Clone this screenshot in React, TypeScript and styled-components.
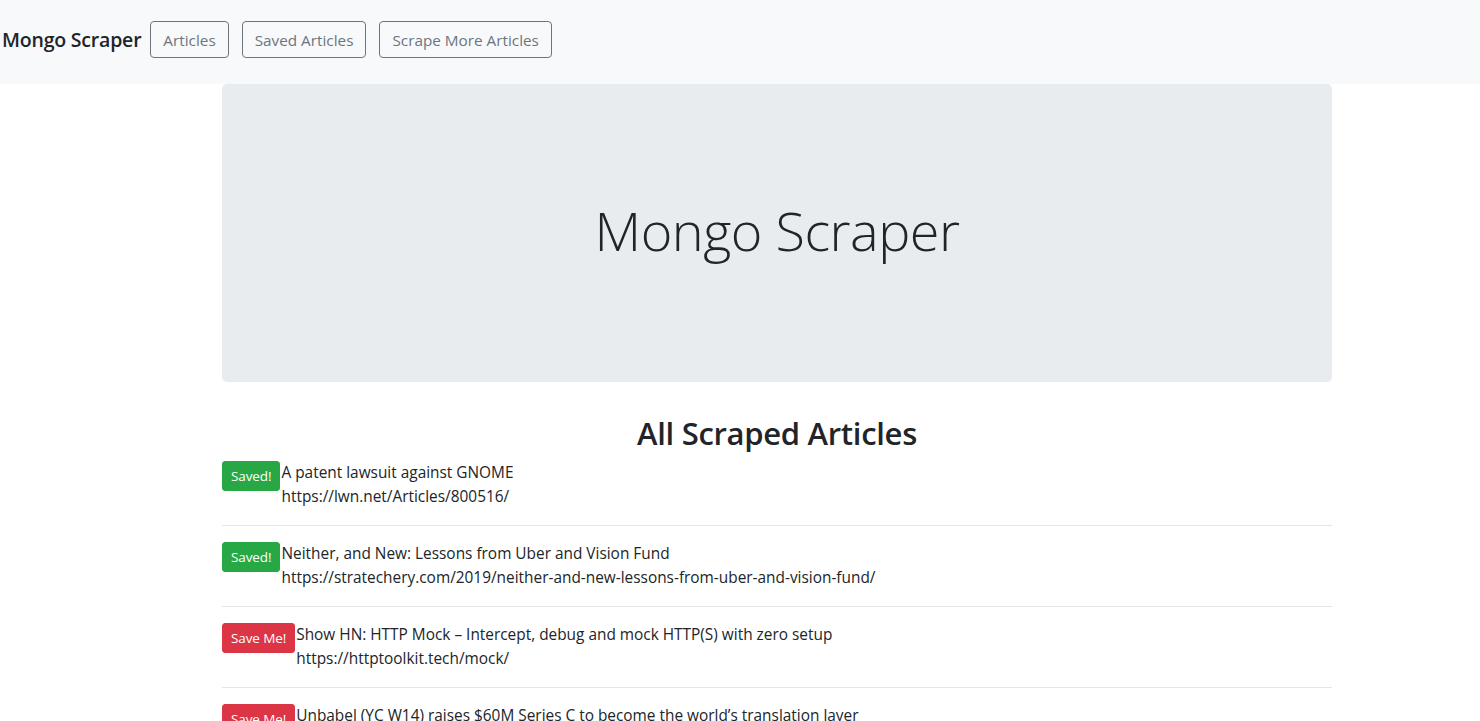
import styled, { createGlobalStyle } from "styled-components";

const GlobalStyle = createGlobalStyle`
  body {
    margin: 0;
    font-family: "Open Sans", "Noto Sans", sans-serif;
    font-size: 16px;
    line-height: 1.5;
    color: #212529;
    background: #fff;
  }
  * {
    box-sizing: border-box;
  }
`;

const Navbar = styled.nav`
  display: flex;
  align-items: center;
  height: 84px;
  padding: 0 2px 5px;
  background: #f8f9fa;
`;

const Brand = styled.a`
  font-size: 19.5px;
  font-weight: 600;
  color: #212529;
  margin-right: 9px;
  text-decoration: none;
  letter-spacing: -0.2px;
`;

const NavButton = styled.button`
  height: 37px;
  padding: 0 12px;
  margin-right: 13px;
  font-family: inherit;
  font-size: 15.3px;
  color: #6c757d;
  background: transparent;
  border: 1px solid #6c757d;
  border-radius: 4px;
`;

const Container = styled.main`
  width: 1110px;
  margin-left: 222px;
`;

const Jumbotron = styled.section`
  display: flex;
  align-items: center;
  justify-content: center;
  height: 298px;
  padding-bottom: 5px;
  margin-bottom: 32px;
  background: #e9ecef;
  border-radius: 5px;
`;

const Display = styled.h1`
  margin: 0;
  font-size: 54px;
  font-weight: 300;
  line-height: 1.2;
  letter-spacing: -0.5px;
`;

const Heading = styled.h2`
  margin: 0 0 8px;
  text-align: center;
  font-size: 31px;
  font-weight: 600;
  line-height: 1.26;
  letter-spacing: -0.3px;
`;

const Row = styled.div`
  display: flex;
  align-items: flex-start;
`;

const SaveButton = styled.button<{ $saved: boolean }>`
  flex: none;
  height: 30px;
  padding: 0 8px;
  font-family: inherit;
  font-size: 13.5px;
  color: #fff;
  background: ${(p) => (p.$saved ? "#28a745" : "#dc3545")};
  border: 1px solid ${(p) => (p.$saved ? "#28a745" : "#dc3545")};
  border-radius: 3px;
  letter-spacing: -0.1px;
`;

const Info = styled.div`
  padding-left: 1px;
  font-size: 15.4px;
  line-height: 24px;
`;

const Divider = styled.hr`
  margin: 16px 0;
  border: 0;
  border-top: 1px solid rgba(0, 0, 0, 0.1);
`;

const articles = [
  {
    saved: true,
    title: "A patent lawsuit against GNOME",
    link: "https://lwn.net/Articles/800516/",
  },
  {
    saved: true,
    title: "Neither, and New: Lessons from Uber and Vision Fund",
    link: "https://stratechery.com/2019/neither-and-new-lessons-from-uber-and-vision-fund/",
  },
  {
    saved: false,
    title: "Show HN: HTTP Mock – Intercept, debug and mock HTTP(S) with zero setup",
    link: "https://httptoolkit.tech/mock/",
  },
  {
    saved: false,
    title: "Unbabel (YC W14) raises $60M Series C to become the world’s translation layer",
    link: "https://techcrunch.com/",
  },
];

export default function App() {
  return (
    <>
      <GlobalStyle />
      <Navbar>
        <Brand href="#">Mongo Scraper</Brand>
        <NavButton>Articles</NavButton>
        <NavButton>Saved Articles</NavButton>
        <NavButton>Scrape More Articles</NavButton>
      </Navbar>
      <Container>
        <Jumbotron>
          <Display>Mongo Scraper</Display>
        </Jumbotron>
        <Heading>All Scraped Articles</Heading>
        {articles.map((a) => (
          <div key={a.link}>
            <Row>
              <SaveButton $saved={a.saved}>{a.saved ? "Saved!" : "Save Me!"}</SaveButton>
              <Info>
                <div>{a.title}</div>
                <div>{a.link}</div>
              </Info>
            </Row>
            <Divider />
          </div>
        ))}
      </Container>
    </>
  );
}
